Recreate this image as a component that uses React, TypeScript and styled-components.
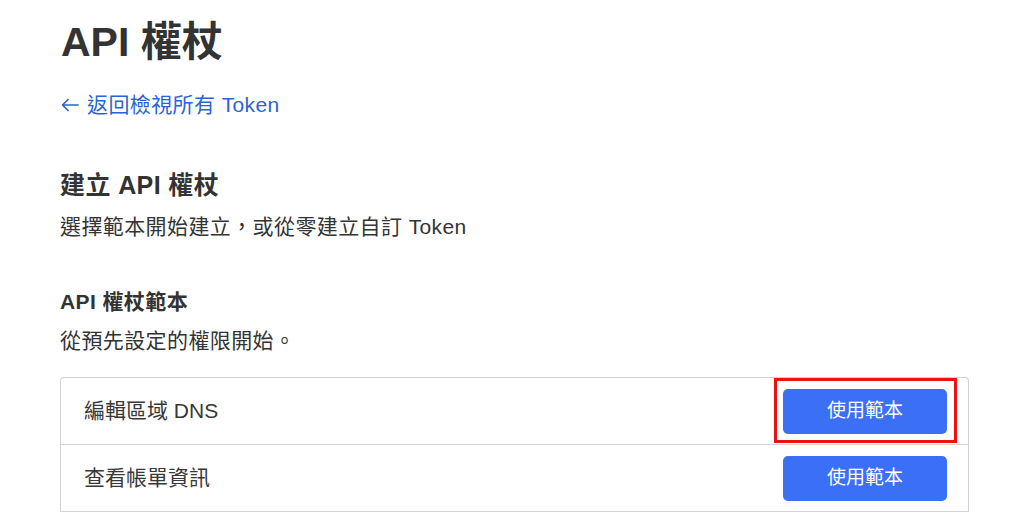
import React from "react";
import styled, { createGlobalStyle } from "styled-components";

const Global = createGlobalStyle`
  html, body { margin: 0; padding: 0; background: #ffffff; }
  body {
    font-family: "Liberation Sans", "Noto Sans CJK TC", Arial, sans-serif;
    color: #333333;
    -webkit-font-smoothing: antialiased;
  }
`;

const Page = styled.main`
  display: flex;
  flex-direction: column;
  padding: 18px 0 0 60px;
  width: 909px;
`;

const Title = styled.h1`
  margin: 0;
  font-size: 41px;
  line-height: 48px;
  font-weight: 700;
  color: #333333;
  padding-left: 1px;
`;

const BackLink = styled.a`
  display: flex;
  align-items: center;
  gap: 8px;
  margin-top: 25px;
  font-size: 21px;
  line-height: 28px;
  letter-spacing: 0.4px;
  color: #2c63d4;
  text-decoration: none;
  padding-left: 1px;
`;

const SectionTitle = styled.h2`
  margin: 50px 0 0;
  font-size: 25px;
  line-height: 32px;
  font-weight: 700;
  letter-spacing: 0.4px;
  color: #333333;
`;

const Text = styled.p<{ $top: number }>`
  margin: ${(p) => p.$top}px 0 0;
  font-size: 21px;
  line-height: 28px;
  letter-spacing: 0.4px;
  color: #333333;
`;

const SubTitle = styled.h3`
  margin: 47px 0 0;
  font-size: 21px;
  line-height: 28px;
  font-weight: 700;
  letter-spacing: 0.4px;
  color: #333333;
`;

const Card = styled.div`
  margin-top: 22px;
  border: 1px solid #d2d2d2;
  border-bottom: none;
  border-radius: 4px 4px 0 0;
  display: flex;
  flex-direction: column;
`;

const Row = styled.div`
  display: flex;
  align-items: center;
  justify-content: space-between;
  height: 66px;
  padding: 0 21px 0 23px;
  border-bottom: 1px solid #d2d2d2;
`;

const RowLabel = styled.span`
  font-size: 21px;
  line-height: 28px;
  color: #383838;
`;

const ButtonWrap = styled.div`
  position: relative;
  display: flex;
`;

const Highlight = styled.span`
  position: absolute;
  left: -9px;
  right: -10px;
  top: -11px;
  bottom: -9px;
  border: 3px solid #ee1111;
  pointer-events: none;
`;

const Button = styled.button`
  width: 164px;
  height: 45px;
  border: none;
  border-radius: 5px;
  background: #3b6ff6;
  color: #ffffff;
  font-family: "Liberation Sans", "Noto Sans CJK TC", Arial, sans-serif;
  font-size: 19px;
  line-height: 24px;
  cursor: pointer;
`;

const Arrow = () => (
  <svg width="18" height="14" viewBox="0 0 18 14" fill="none" stroke="#2c63d4" strokeWidth="1.7" strokeLinecap="round" strokeLinejoin="round">
    <path d="M17 7H1.5M7 1.5L1.5 7L7 12.5" />
  </svg>
);

const templates = [
  { name: "編輯區域 DNS", highlighted: true },
  { name: "查看帳單資訊", highlighted: false },
];

export default function App() {
  return (
    <>
      <Global />
      <Page>
        <Title>API 權杖</Title>
        <BackLink href="#">
          <Arrow />
          <span>返回檢視所有 Token</span>
        </BackLink>
        <SectionTitle>建立 API 權杖</SectionTitle>
        <Text $top={12}>選擇範本開始建立，或從零建立自訂 Token</Text>
        <SubTitle>API 權杖範本</SubTitle>
        <Text $top={11}>從預先設定的權限開始。</Text>
        <Card>
          {templates.map((t) => (
            <Row key={t.name}>
              <RowLabel>{t.name}</RowLabel>
              <ButtonWrap>
                <Button>使用範本</Button>
                {t.highlighted && <Highlight />}
              </ButtonWrap>
            </Row>
          ))}
        </Card>
      </Page>
    </>
  );
}
